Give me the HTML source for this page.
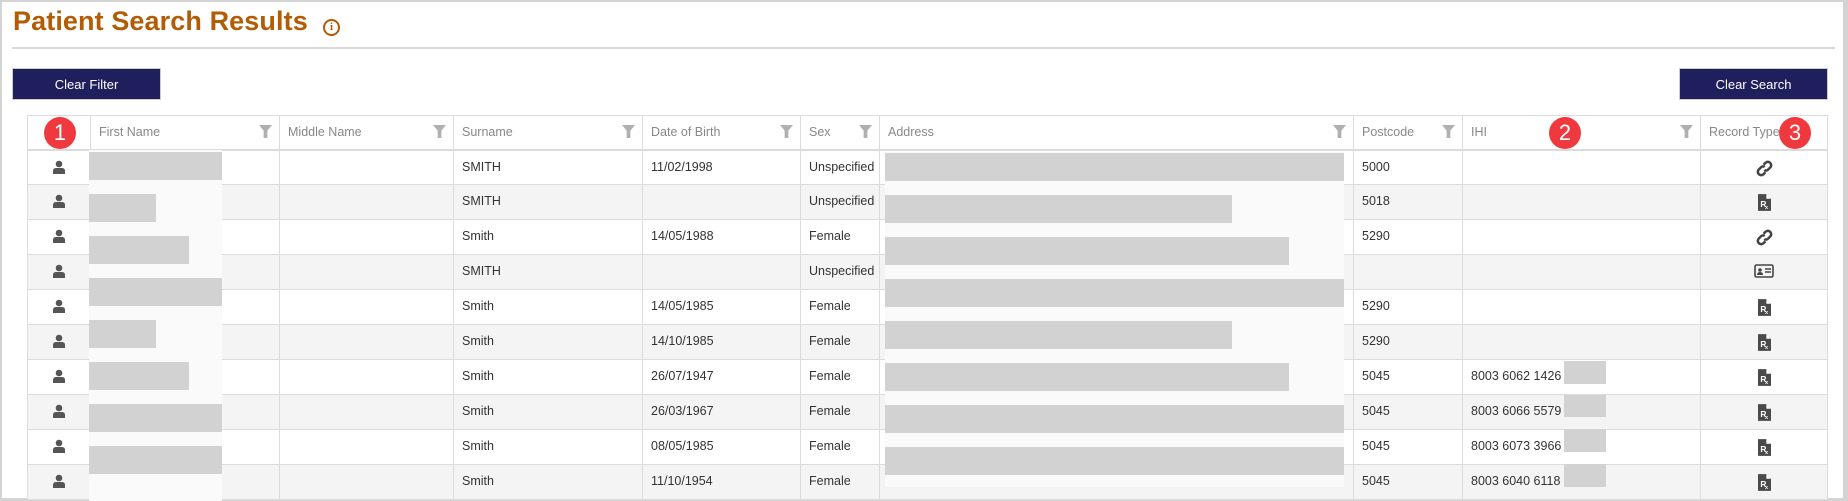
<!DOCTYPE html>
<html><head><meta charset="utf-8"><style>
*{margin:0;padding:0;box-sizing:border-box}
body{width:1848px;height:501px;background:#fff;position:relative;overflow:hidden;font-family:"Liberation Sans",Arial,sans-serif}
.frame{position:absolute;left:0;top:0;width:1848px;height:501px;border:2px solid #d4d4d4;border-right-width:5px;border-bottom-width:3px}
h1{position:absolute;left:13px;top:6px;font-size:27px;font-weight:bold;color:#b35c06;letter-spacing:0.1px}
.info{position:absolute;left:323px;top:19px;width:17px;height:17px;border:2px solid #b35c06;border-radius:50%;color:#b35c06;font:bold 11px "Liberation Serif",serif;text-align:center;line-height:13px}
.hr{position:absolute;left:12px;top:47px;width:1823px;height:2px;background:#d8d8d8}
.btn{position:absolute;top:68px;height:32px;background:#201f5e;color:#fff;font-size:13px;text-align:center;line-height:32px;border:1px solid #ccc}
table{position:absolute;left:27px;top:115px;border-collapse:collapse;table-layout:fixed;width:1800px}
td,th{border:1px solid #dcdcdc;font-size:12.5px;text-align:left;vertical-align:top;padding:9px 0 0 8px;color:#333;font-weight:normal;white-space:nowrap;overflow:hidden}
th{height:34px;color:#888;position:relative;border-bottom:2px solid #dcdcdc}
td{height:35px}
tr:nth-child(odd) td{background:#f4f4f4}
.f{position:absolute;right:7px;top:9px}
.c{text-align:center;padding:9px 0 0 0}
.ov{position:absolute;background:#fafafa}
.bl{position:absolute;background:#d2d2d2;height:28px}
.badge{position:absolute;width:32px;height:32px;border-radius:50%;background:#f0393f;color:#fff;font-size:22px;text-align:center;line-height:32px}
</style></head><body>
<div class="frame"></div>
<h1>Patient Search Results</h1>
<div class="info">i</div>
<div class="hr"></div>
<div class="btn" style="left:12px;width:149px">Clear Filter</div>
<div class="btn" style="left:1679px;width:149px">Clear Search</div>

<svg width="0" height="0" style="position:absolute">
<defs>
<symbol id="fil" viewBox="0 0 14 14"><path d="M0 0H14L9 6V14H5V6Z" fill="#b0b0b0"/></symbol>
<symbol id="per" viewBox="0 0 14 14"><circle cx="7" cy="4" r="3.3" fill="#555"/><path d="M1 14V11Q1 8 4 8H10Q13 8 13 11V14Z" fill="#555"/></symbol>
<symbol id="rx" viewBox="0 0 14 18"><path d="M0 0H9L14 5V18H0Z" fill="#4a4a4a"/><path d="M9 0V5H14" fill="#fff"/><text x="2.5" y="14" font-size="9" font-weight="bold" fill="#fff" font-family="Liberation Sans">R</text><text x="7.5" y="16" font-size="6" font-weight="bold" fill="#fff" font-family="Liberation Sans">x</text></symbol>
<symbol id="lnk" viewBox="0 0 18 18"><g fill="none" stroke="#444" stroke-width="2.6"><path d="M8 5L10 3Q12.5 0.8 15 3Q17.2 5.5 15 8L12.5 10.5Q10.5 12 8.8 10.5"/><path d="M10 13L8 15Q5.5 17.2 3 15Q0.8 12.5 3 10L5.5 7.5Q7.5 6 9.2 7.5"/></g></symbol>
<symbol id="idc" viewBox="0 0 20 14"><rect x="1" y="1" width="18" height="12" rx="1.5" fill="none" stroke="#444" stroke-width="1.6"/><circle cx="6" cy="6" r="1.8" fill="#444"/><path d="M3 11Q3 8 6 8Q9 8 9 11Z" fill="#444"/><path d="M11 5H17M11 8H17" stroke="#444" stroke-width="1.4"/></symbol>
</defs></svg>

<table>
<colgroup><col style="width:63px"><col style="width:189px"><col style="width:174px"><col style="width:189px"><col style="width:158px"><col style="width:79px"><col style="width:474px"><col style="width:109px"><col style="width:238px"><col style="width:127px"></colgroup>
<tr><th></th><th>First Name<svg class="f" width="13" height="13"><use href="#fil"/></svg></th><th>Middle Name<svg class="f" width="13" height="13"><use href="#fil"/></svg></th><th>Surname<svg class="f" width="13" height="13"><use href="#fil"/></svg></th><th>Date of Birth<svg class="f" width="13" height="13"><use href="#fil"/></svg></th><th>Sex<svg class="f" width="13" height="13"><use href="#fil"/></svg></th><th>Address<svg class="f" width="13" height="13"><use href="#fil"/></svg></th><th>Postcode<svg class="f" width="13" height="13"><use href="#fil"/></svg></th><th>IHI<svg class="f" width="13" height="13"><use href="#fil"/></svg></th><th>Record Type</th></tr>
<tr><td class="c"><svg width="14" height="14"><use href="#per"/></svg></td><td></td><td></td><td>SMITH</td><td>11/02/1998</td><td>Unspecified</td><td></td><td>5000</td><td></td><td class="c"><svg width="17" height="17"><use href="#lnk"/></svg></td></tr>
<tr><td class="c"><svg width="14" height="14"><use href="#per"/></svg></td><td></td><td></td><td>SMITH</td><td></td><td>Unspecified</td><td></td><td>5018</td><td></td><td class="c"><svg width="13" height="17"><use href="#rx"/></svg></td></tr>
<tr><td class="c"><svg width="14" height="14"><use href="#per"/></svg></td><td></td><td></td><td>Smith</td><td>14/05/1988</td><td>Female</td><td></td><td>5290</td><td></td><td class="c"><svg width="17" height="17"><use href="#lnk"/></svg></td></tr>
<tr><td class="c"><svg width="14" height="14"><use href="#per"/></svg></td><td></td><td></td><td>SMITH</td><td></td><td>Unspecified</td><td></td><td></td><td></td><td class="c"><svg width="20" height="14"><use href="#idc"/></svg></td></tr>
<tr><td class="c"><svg width="14" height="14"><use href="#per"/></svg></td><td></td><td></td><td>Smith</td><td>14/05/1985</td><td>Female</td><td></td><td>5290</td><td></td><td class="c"><svg width="13" height="17"><use href="#rx"/></svg></td></tr>
<tr><td class="c"><svg width="14" height="14"><use href="#per"/></svg></td><td></td><td></td><td>Smith</td><td>14/10/1985</td><td>Female</td><td></td><td>5290</td><td></td><td class="c"><svg width="13" height="17"><use href="#rx"/></svg></td></tr>
<tr><td class="c"><svg width="14" height="14"><use href="#per"/></svg></td><td></td><td></td><td>Smith</td><td>26/07/1947</td><td>Female</td><td></td><td>5045</td><td>8003 6062 1426</td><td class="c"><svg width="13" height="17"><use href="#rx"/></svg></td></tr>
<tr><td class="c"><svg width="14" height="14"><use href="#per"/></svg></td><td></td><td></td><td>Smith</td><td>26/03/1967</td><td>Female</td><td></td><td>5045</td><td>8003 6066 5579</td><td class="c"><svg width="13" height="17"><use href="#rx"/></svg></td></tr>
<tr><td class="c"><svg width="14" height="14"><use href="#per"/></svg></td><td></td><td></td><td>Smith</td><td>08/05/1985</td><td>Female</td><td></td><td>5045</td><td>8003 6073 3966</td><td class="c"><svg width="13" height="17"><use href="#rx"/></svg></td></tr>
<tr><td class="c"><svg width="14" height="14"><use href="#per"/></svg></td><td></td><td></td><td>Smith</td><td>11/10/1954</td><td>Female</td><td></td><td>5045</td><td>8003 6040 6118</td><td class="c"><svg width="13" height="17"><use href="#rx"/></svg></td></tr>
</table>

<div class="ov" style="left:89px;top:150px;width:133px;height:351px"></div>
<div class="bl" style="left:89px;top:152px;width:133px"></div>
<div class="bl" style="left:89px;top:194px;width:67px"></div>
<div class="bl" style="left:89px;top:236px;width:100px"></div>
<div class="bl" style="left:89px;top:278px;width:133px"></div>
<div class="bl" style="left:89px;top:320px;width:67px"></div>
<div class="bl" style="left:89px;top:362px;width:100px"></div>
<div class="bl" style="left:89px;top:404px;width:133px"></div>
<div class="bl" style="left:89px;top:446px;width:133px"></div>

<div class="ov" style="left:885px;top:152px;width:459px;height:335px"></div>
<div class="bl" style="left:885px;top:153px;width:459px"></div>
<div class="bl" style="left:885px;top:195px;width:347px"></div>
<div class="bl" style="left:885px;top:237px;width:404px"></div>
<div class="bl" style="left:885px;top:279px;width:459px"></div>
<div class="bl" style="left:885px;top:321px;width:347px"></div>
<div class="bl" style="left:885px;top:363px;width:404px"></div>
<div class="bl" style="left:885px;top:405px;width:459px"></div>
<div class="bl" style="left:885px;top:447px;width:459px"></div>

<div class="bl" style="left:1564px;top:361px;width:42px;height:23px"></div>
<div class="bl" style="left:1564px;top:395px;width:42px;height:22px"></div>
<div class="bl" style="left:1564px;top:429px;width:42px;height:23px"></div>
<div class="bl" style="left:1564px;top:464px;width:42px;height:23px"></div>

<div class="badge" style="left:44px;top:117px">1</div>
<div class="badge" style="left:1549px;top:117px">2</div>
<div class="badge" style="left:1779px;top:117px">3</div>
</body></html>
